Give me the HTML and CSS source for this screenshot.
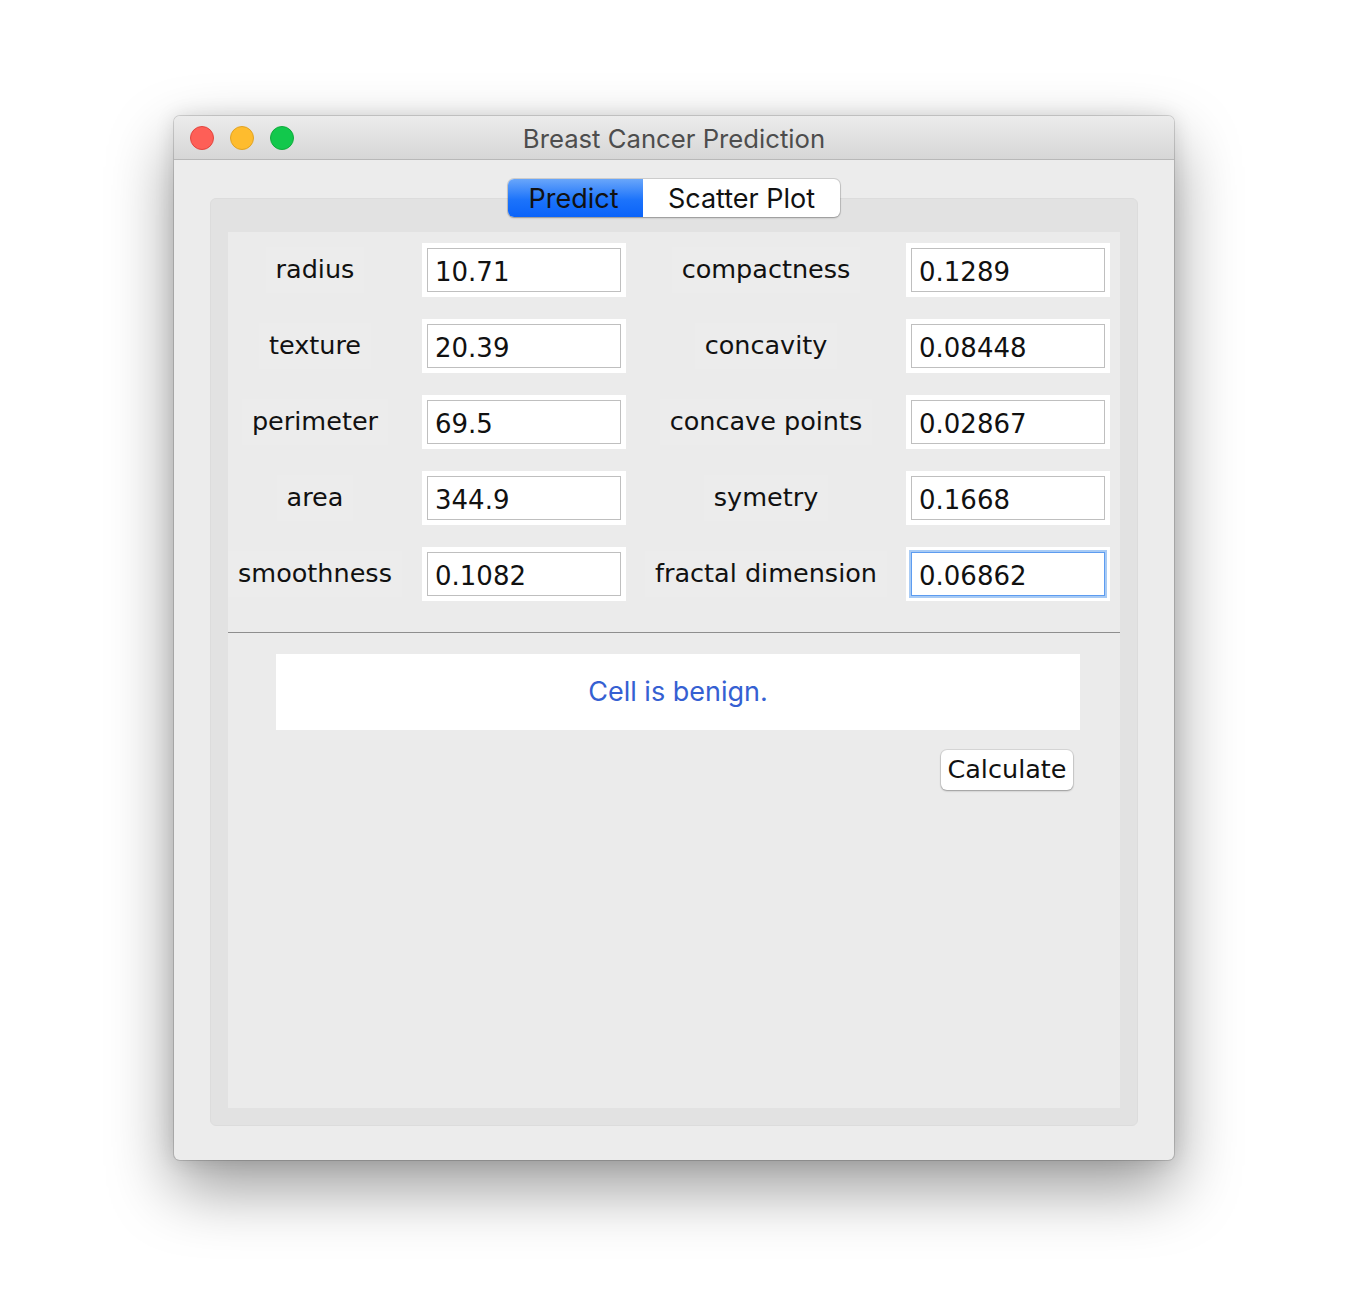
FILE: index.html
```html
<!DOCTYPE html>
<html>
<head>
<meta charset="utf-8">
<title>Breast Cancer Prediction</title>
<link rel="stylesheet" href="styles.css">
</head>
<body>
<div class="stage">
  <div class="window">
    <div class="titlebar">
      <div class="lights">
        <span class="light red"></span>
        <span class="light yellow"></span>
        <span class="light green"></span>
      </div>
      <div class="title">Breast Cancer Prediction</div>
    </div>
    <div class="win-body">
      <div class="tabs">
        <div class="tab active">Predict</div>
        <div class="tab">Scatter Plot</div>
      </div>
      <div class="pane">
        <div class="content">
          <div class="grid">
            <div class="label-cell"><span class="label">radius</span></div>
            <div class="field"><input class="input" value="10.71"></div>
            <div class="label-cell"><span class="label">compactness</span></div>
            <div class="field"><input class="input" value="0.1289"></div>

            <div class="label-cell"><span class="label">texture</span></div>
            <div class="field"><input class="input" value="20.39"></div>
            <div class="label-cell"><span class="label">concavity</span></div>
            <div class="field"><input class="input" value="0.08448"></div>

            <div class="label-cell"><span class="label">perimeter</span></div>
            <div class="field"><input class="input" value="69.5"></div>
            <div class="label-cell"><span class="label">concave points</span></div>
            <div class="field"><input class="input" value="0.02867"></div>

            <div class="label-cell"><span class="label">area</span></div>
            <div class="field"><input class="input" value="344.9"></div>
            <div class="label-cell"><span class="label">symetry</span></div>
            <div class="field"><input class="input" value="0.1668"></div>

            <div class="label-cell"><span class="label">smoothness</span></div>
            <div class="field"><input class="input" value="0.1082"></div>
            <div class="label-cell"><span class="label">fractal dimension</span></div>
            <div class="field"><input class="input focused" value="0.06862"></div>
          </div>
          <div class="separator"></div>
          <div class="result">Cell is benign.</div>
          <div class="actions">
            <div class="button">Calculate</div>
          </div>
        </div>
      </div>
    </div>
  </div>
</div>
</body>
</html>
```

FILE: styles.css
```css
html, body {
  margin: 0;
  padding: 0;
  background: #ffffff;
}

.stage {
  padding: 116px 0 134px 174px;
}

.window {
  width: 1000px;
  height: 1044px;
  background: #ececec;
  border-radius: 6px;
  box-shadow: 0 0 0 1px rgba(0, 0, 0, 0.14), 0 28px 65px rgba(0, 0, 0, 0.4), 0 0 20px rgba(0, 0, 0, 0.12);
  display: flex;
  flex-direction: column;
  overflow: hidden;
}

.titlebar {
  height: 43px;
  border-bottom: 1px solid #b8b8b8;
  background: linear-gradient(#ececec, #d6d6d6);
  display: flex;
  align-items: center;
  position: relative;
}

.lights {
  display: flex;
  gap: 16px;
  padding-left: 16px;
}

.light {
  width: 22px;
  height: 22px;
  border-radius: 50%;
  border: 1px solid transparent;
}

.red { background: #fe5f57; border-color: #e2463f; }
.yellow { background: #febc2e; border-color: #e1a325; }
.green { background: #12c84c; border-color: #11ab3c; }

.title {
  position: absolute;
  left: 0;
  right: 0;
  top: 0;
  bottom: 0;
  display: flex;
  align-items: center;
  justify-content: center;
  font-family: Inter, "Liberation Sans", sans-serif;
  font-size: 25.7px;
  color: #4d4d4d;
  padding-top: 1px;
}

.win-body {
  flex: 1;
  padding: 19px 36px 34px 36px;
  display: flex;
  flex-direction: column;
}

.tabs {
  align-self: center;
  display: flex;
  height: 38px;
  border-radius: 6px;
  background: #ffffff;
  box-shadow: 0 0 0 1px rgba(0, 0, 0, 0.12), 0 1px 2px rgba(0, 0, 0, 0.25);
  position: relative;
  z-index: 1;
  margin-bottom: -19px;
  overflow: hidden;
  font-family: Inter, "Liberation Sans", sans-serif;
  font-size: 27px;
  color: #111;
}

.tab {
  display: flex;
  align-items: center;
  justify-content: center;
}

.tab:first-child {
  width: 135px;
  padding-right: 4px;
  box-sizing: border-box;
}

.tab:last-child {
  width: 197px;
}

.tab.active {
  background: linear-gradient(#69a6fa, #1c73fb 55%, #0a63f9);
}

.pane {
  flex: 1;
  background: #e2e2e2;
  border: 1px solid #dcdcdc;
  border-radius: 6px;
  padding: 33px 17px 17px 17px;
  display: flex;
  flex-direction: column;
}

.content {
  flex: 1;
  background: #ebebeb;
  display: flex;
  flex-direction: column;
}

.grid {
  display: grid;
  grid-template-columns: 174px 204px 240px 204px;
  grid-auto-rows: 54px;
  column-gap: 20px;
  row-gap: 22px;
  padding-top: 11px;
}

.label-cell {
  display: flex;
  align-items: center;
  justify-content: center;
}

.label {
  font-family: "DejaVu Sans", Verdana, sans-serif;
  font-size: 25.5px;
  color: #111;
  background: #ececec;
  padding: 0 10px;
  height: 46px;
  line-height: 44px;
  white-space: nowrap;
}

.field {
  background: #ffffff;
  padding: 5px;
  display: flex;
}

.input {
  flex: 1;
  min-width: 0;
  box-sizing: border-box;
  height: 44px;
  border: 1px solid #bfbfbf;
  background: #ffffff;
  padding: 3px 7px 0 7px;
  margin: 0;
  font-family: "DejaVu Sans", Verdana, sans-serif;
  font-size: 26px;
  color: #111;
  outline: none;
}

.input.focused {
  border: 1px solid #5d9cf0;
  box-shadow: 0 0 0 2px #a8cbf5;
}

.separator {
  height: 1px;
  background: #8e8e8e;
  margin-top: 31px;
}

.result {
  margin: 21px 40px 0 48px;
  height: 76px;
  background: #ffffff;
  display: flex;
  align-items: center;
  justify-content: center;
  font-family: Inter, "Liberation Sans", sans-serif;
  font-size: 27px;
  color: #3560d2;
  padding-bottom: 2px;
  box-sizing: border-box;
}

.actions {
  display: flex;
  justify-content: flex-end;
  padding: 20px 47px 0 0;
}

.button {
  width: 132px;
  height: 40px;
  box-sizing: border-box;
  background: #ffffff;
  border-radius: 6px;
  box-shadow: 0 0 0 1px rgba(0, 0, 0, 0.08), 0 1px 2px rgba(0, 0, 0, 0.3);
  display: flex;
  align-items: center;
  justify-content: center;
  font-family: "DejaVu Sans", Verdana, sans-serif;
  font-size: 25.5px;
  color: #111;
  padding-bottom: 2px;
}
```
